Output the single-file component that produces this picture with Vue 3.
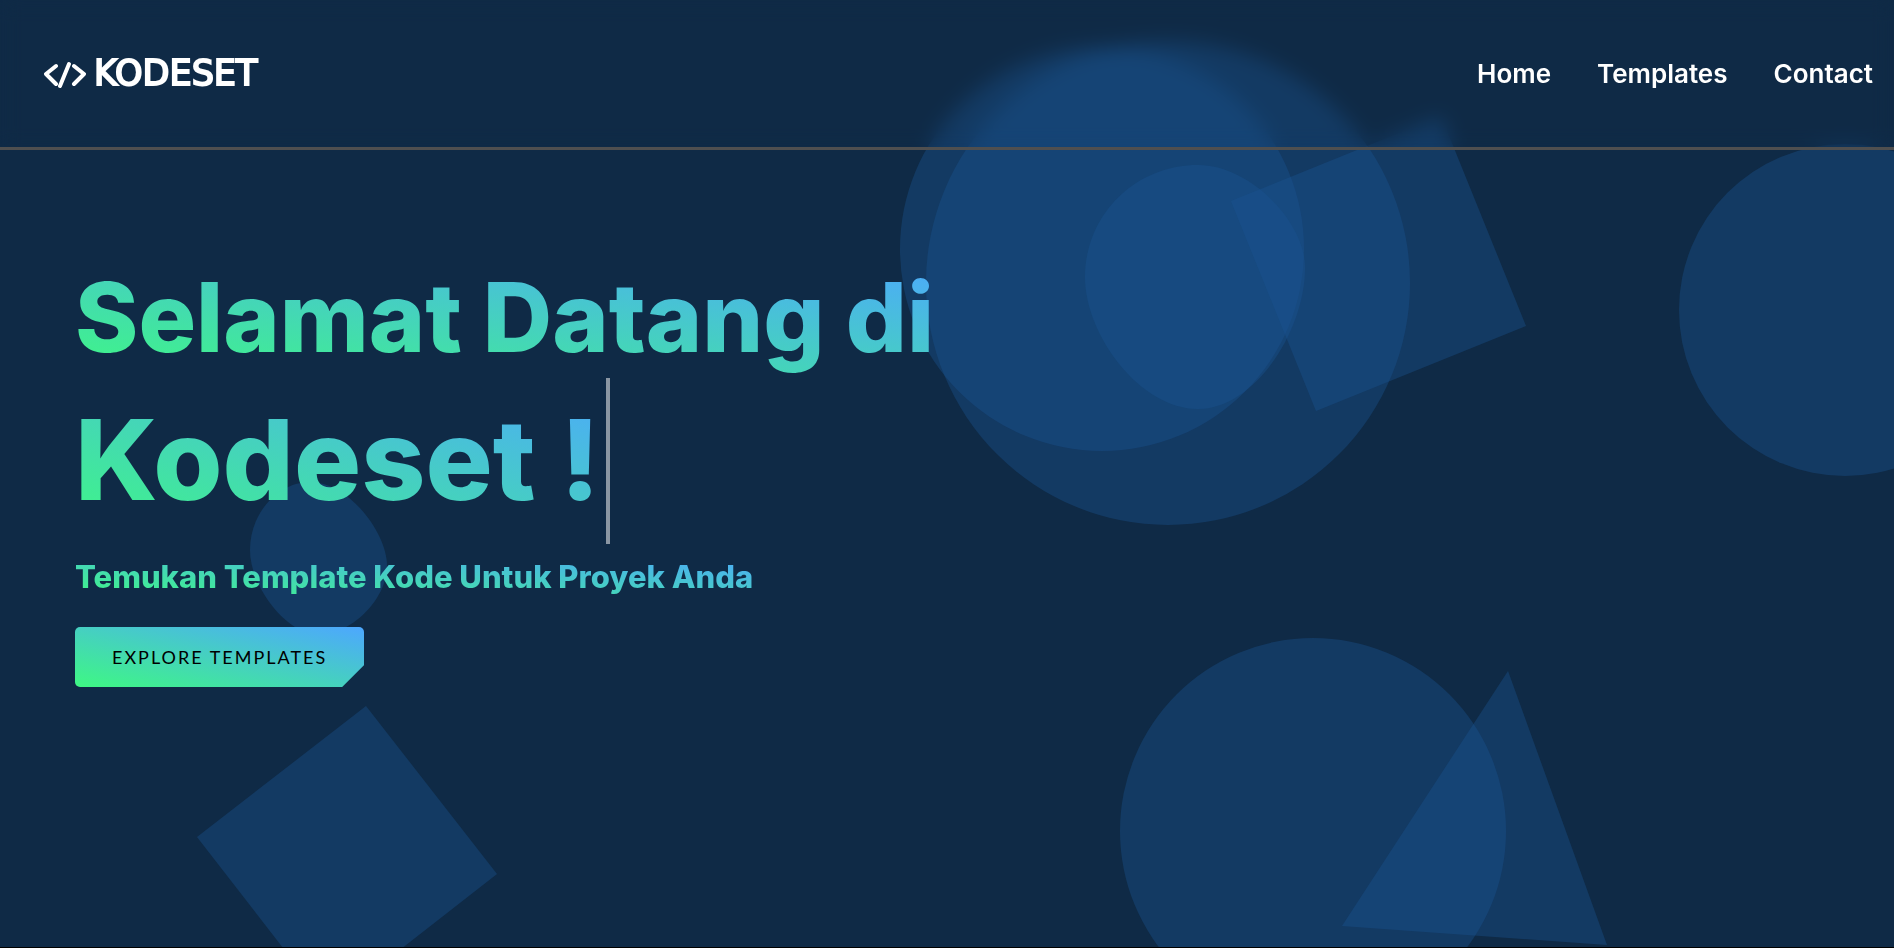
<script setup>
const links = ['Home', 'Templates', 'Contact']
</script>

<template>
  <div class="page">
    <svg class="shapes" viewBox="0 0 1894 947" preserveAspectRatio="xMidYMin slice" aria-hidden="true">
      <circle cx="1102" cy="249" r="202" />
      <circle cx="1168" cy="283" r="242" />
      <path d="M1198 165C1250 165 1305 222 1305 268C1305 330 1255 409 1198 409C1140 409 1085 335 1085 277C1085 215 1135 165 1198 165Z" />
      <path d="M1231 201L1441 116L1526 326L1316 411Z" />
      <circle cx="1845" cy="310" r="166" />
      <circle cx="1313" cy="831" r="193" />
      <path d="M1508 671L1342 926L1607 945Z" />
      <path d="M366 706L197 837L328 1006L497 874Z" />
      <path d="M310 482C348 482 387 532 387 566C387 600 350 635 318 635C288 635 250 588 250 550C250 513 278 482 310 482Z" />
    </svg>

    <header class="bar">
      <a class="logo" href="#">
        <svg class="mark" viewBox="0 0 42 28" aria-hidden="true">
          <path d="M12 6L2 14L12 24M25 4L16 26M30 6L40 14L30 24" />
        </svg>
        <span class="name">KODESET</span>
      </a>
      <nav class="nav">
        <a v-for="link in links" :key="link" href="#">{{ link }}</a>
      </nav>
    </header>

    <main class="hero">
      <h1>
        <span class="line welcome">Selamat Datang di</span>
        <span class="typed"><span class="line brand">Kodeset !</span></span>
      </h1>
      <h2 class="line">Temukan Template Kode Untuk Proyek Anda</h2>
      <button type="button">EXPLORE TEMPLATES</button>
    </main>
  </div>
</template>

<style>
body {
  background: #0f2a46;
}
</style>

<style scoped>
.page {
  --accent: linear-gradient(to top right, #3ef883, #4da7ff);
  position: relative;
  box-sizing: border-box;
  min-height: 100vh;
  overflow: hidden;
  background: #0f2a46;
  border-bottom: 1px solid #000;
  font-family: Inter, "Liberation Sans", sans-serif;
}
.shapes {
  position: absolute;
  inset: 0;
  width: 100%;
  height: 100%;
  fill: rgba(26, 83, 147, 0.38);
}
.bar {
  position: relative;
  display: flex;
  align-items: center;
  justify-content: space-between;
  height: 147px;
  padding: 0 21px 0 44px;
  border-bottom: 3px solid #4f4f4f;
  backdrop-filter: blur(10px);
}
.logo {
  display: flex;
  align-items: center;
  gap: 8px;
  color: #fff;
  font: 400 35px/40px "DejaVu Sans", sans-serif;
  -webkit-text-stroke: 2px #fff;
  text-decoration: none;
}
.name {
  padding-bottom: 2px;
}
.mark {
  width: 42px;
  height: 28px;
  fill: none;
  stroke: #fff;
  stroke-width: 4;
  stroke-linecap: round;
  stroke-linejoin: round;
}
.nav {
  display: flex;
  gap: 46px;
}
.nav a {
  color: #fff;
  font-size: 26px;
  font-weight: 600;
  line-height: 36px;
  text-decoration: none;
}
.hero {
  position: relative;
  padding: 107px 75px 60px;
}
h1,
h2 {
  margin: 0;
}
h1 {
  display: flex;
  flex-direction: column;
  align-items: flex-start;
}
.line {
  width: fit-content;
  background: var(--accent);
  background-clip: text;
  color: transparent;
  font-weight: 800;
}
.welcome {
  font-size: 96px;
  line-height: 121px;
}
.typed {
  padding-bottom: 4px;
  border-right: 4px solid #8a96a3;
}
.brand {
  display: block;
  padding-right: 6px;
  font-size: 112px;
  line-height: 162px;
}
h2 {
  margin-top: 10px;
  font-size: 31px;
  line-height: 46px;
}
button {
  display: block;
  margin-top: 27px;
  height: 60px;
  padding: 0 37px;
  border: 0;
  border-radius: 5px;
  background: var(--accent);
  clip-path: polygon(0 0, 100% 0, 100% calc(100% - 22px), calc(100% - 22px) 100%, 0 100%);
  color: #000;
  font: 400 18px/30px Lato, sans-serif;
  letter-spacing: 2px;
}
</style>
